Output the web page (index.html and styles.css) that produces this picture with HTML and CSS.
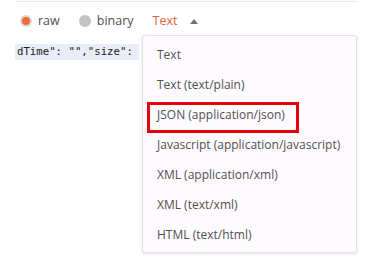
FILE: index.html
```html
<!DOCTYPE html>
<html>
<head>
<meta charset="utf-8">
<link rel="stylesheet" href="styles.css">
</head>
<body>
<div class="panel">
  <div class="toolbar">
    <label class="radio"><span class="dot dot-on"></span><span class="lbl">raw</span></label>
    <label class="radio"><span class="dot"></span><span class="lbl">binary</span></label>
    <span class="type">Text</span>
    <span class="caret"></span>
  </div>
  <div class="code"><span class="hl">dTime": "","size": </span><span class="gap"></span><span class="rest">1</span></div>
  <ul class="menu">
    <li class="item">Text</li>
    <li class="item">Text (text/plain)</li>
    <li class="item item-marked"><span class="mark"></span>JSON (application/json)</li>
    <li class="item">Javascript (application/javascript)</li>
    <li class="item">XML (application/xml)</li>
    <li class="item">XML (text/xml)</li>
    <li class="item">HTML (text/html)</li>
  </ul>
</div>
</body>
</html>
```
FILE: styles.css
```css
html, body {
  margin: 0;
  padding: 0;
  background: #ffffff;
}
body {
  width: 385px;
  height: 265px;
  overflow: hidden;
  font-family: "Open Sans", "Noto Sans", sans-serif;
  color: #505050;
}
.panel {
  position: relative;
  height: 264px;
  padding-top: 1px;
}
.toolbar {
  margin-left: 15px;
  width: 342px;
  border-top: 1px solid #e8e8e8;
  height: 38px;
  display: flex;
  align-items: center;
  box-sizing: border-box;
  padding-left: 5px;
  font-size: 12.5px;
}
.radio {
  display: flex;
  align-items: center;
  margin-right: 19px;
}
.dot {
  width: 12px;
  height: 12px;
  border-radius: 50%;
  background: #c2c2c2;
  box-sizing: border-box;
  margin-right: 6px;
}
.dot-on {
  background: #f26b3a;
  border: 2px solid #d8d8d8;
}
.lbl {
  color: #505050;
}
.type {
  color: #e0643c;
}
.caret {
  width: 0;
  height: 0;
  border-left: 4px solid transparent;
  border-right: 4px solid transparent;
  border-bottom: 5px solid #707070;
  margin-left: 13px;
  margin-top: 1px;
}
.code {
  margin: 5px 0 0 15px;
  width: 342px;
  height: 16px;
  line-height: 16px;
  font-family: "DejaVu Sans Mono", monospace;
  font-size: 10.7px;
  color: #1a1a1a;
  white-space: pre;
  overflow: hidden;
  display: flex;
}
.hl {
  background: #e8edf7;
  padding-left: 2px;
}
.gap {
  flex: 1;
}
.rest {
  width: 2px;
  overflow: hidden;
  background: #e8edf7;
}
.menu {
  position: absolute;
  left: 142px;
  top: 35px;
  width: 215px;
  height: 218px;
  box-sizing: border-box;
  margin: 0;
  padding: 4px 0 0 0;
  list-style: none;
  background: #fefbfe;
  border: 1px solid #e2e2e2;
  border-radius: 3px;
  box-shadow: 0 1px 3px rgba(0, 0, 0, 0.12);
}
.item {
  position: relative;
  height: 30px;
  line-height: 30px;
  padding-left: 14px;
  font-size: 12px;
  color: #505050;
  white-space: nowrap;
}
.mark {
  position: absolute;
  left: 4px;
  top: 2px;
  width: 152px;
  height: 31px;
  box-sizing: border-box;
  border: 3px solid #e8000b;
}
```
